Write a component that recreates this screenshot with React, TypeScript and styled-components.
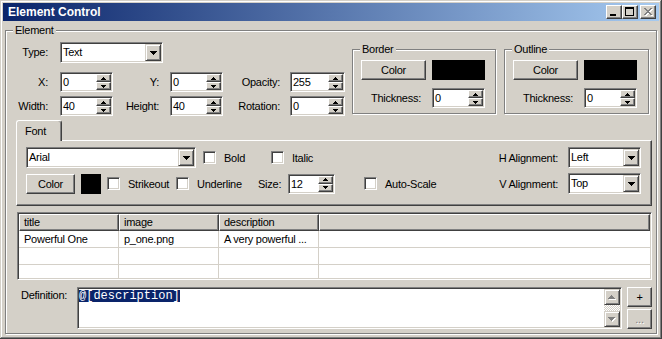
import React from "react";
import styled, { createGlobalStyle, css } from "styled-components";

const FACE = "#d4d0c8";
const SHADOW = "#808080";
const DARK = "#404040";
const UI_FONT = `"Liberation Sans", Arial, sans-serif`;

const GlobalStyle = createGlobalStyle`
  html, body {
    margin: 0;
    padding: 0;
    background: ${FACE};
  }
  body {
    font-family: ${UI_FONT};
    font-size: 11px;
    letter-spacing: -0.25px;
    color: #000;
  }
  * {
    box-sizing: border-box;
  }
`;

// classic 3D edges
const sunken = css`
  border: 1px solid;
  border-color: ${SHADOW} #fff #fff ${SHADOW};
  box-shadow: inset 1px 1px ${DARK}, inset -1px -1px ${FACE};
`;

const raised = css`
  border: 1px solid;
  border-color: #fff ${DARK} ${DARK} #fff;
  box-shadow: inset -1px -1px ${SHADOW};
`;

const Window = styled.div`
  width: 662px;
  height: 339px;
  padding: 3px;
  display: flex;
  flex-direction: column;
  background: ${FACE};
  box-shadow:
    inset -1px -1px ${DARK},
    inset 1px 1px ${FACE},
    inset -2px -2px ${SHADOW},
    inset 2px 2px #fff;
`;

const TitleBar = styled.div`
  height: 18px;
  display: flex;
  align-items: center;
  padding: 0 3px 0 5px;
  background: linear-gradient(to right, #0a246a, #a6caf0);
  color: #fff;
  font: bold 12px "Liberation Sans", Arial, sans-serif;
  letter-spacing: 0;
`;

const TitleButtons = styled.div`
  margin-left: auto;
  display: flex;
`;

const CaptionButton = styled.div<{ $gap?: number }>`
  width: 16px;
  height: 14px;
  margin-left: ${(p) => p.$gap ?? 0}px;
  background: ${FACE};
  ${raised};
  display: flex;
`;

const Body = styled.div`
  flex: 1;
  display: flex;
  padding: 9px 2px 2px;
`;

const Frame = styled.div`
  position: relative;
  border: 1px solid ${SHADOW};
  box-shadow: inset 1px 1px #fff, 1px 1px #fff;
`;

const ElementFrame = styled(Frame)`
  flex: 1;
  display: flex;
  flex-direction: column;
  padding: 11px 4px 4px 2px;
`;

const SubFrame = styled(Frame)<{ $w: number; $ml: number }>`
  width: ${(p) => p.$w}px;
  height: 65px;
  margin: 7px 0 0 ${(p) => p.$ml}px;
  padding: 10px 0 0 8px;
`;

const Legend = styled.span`
  position: absolute;
  top: -8px;
  left: 7px;
  padding: 0 2px;
  line-height: 14px;
  background: ${FACE};
`;

const TopSection = styled.div`
  height: 74px;
  display: flex;
  align-items: flex-start;
`;

const FieldGrid = styled.div`
  display: grid;
  grid-template-columns: 52px 53px 57px 53px 67px 55px;
  grid-template-rows: 26px 20px 20px;
  row-gap: 4px;
  align-items: start;
`;

const FieldLabel = styled.label<{ $pad: number; $lh?: number }>`
  text-align: right;
  padding-right: ${(p) => p.$pad}px;
  line-height: ${(p) => p.$lh ?? 20}px;
  white-space: nowrap;
`;

const TypeCell = styled.div`
  grid-column: span 5;
`;

const SubGrid = styled.div`
  display: grid;
  grid-template-columns: 65px 53px;
  grid-template-rows: 20px 20px;
  column-gap: 6px;
  row-gap: 8px;
`;

const SideLabel = styled.label`
  text-align: right;
  padding-right: 5px;
  line-height: 20px;
  white-space: nowrap;
`;

const SpinBox = styled.div<{ $w: number }>`
  width: ${(p) => p.$w}px;
  height: 20px;
  padding: 1px;
  display: flex;
  background: #fff;
  ${sunken};
`;

const FieldText = styled.div`
  flex: 1;
  padding-left: 1px;
  line-height: 16px;
  white-space: nowrap;
  overflow: hidden;
`;

const SpinButtons = styled.div`
  width: 15px;
  display: flex;
  flex-direction: column;
`;

const SpinButton = styled.div`
  flex: 1;
  display: flex;
  align-items: center;
  justify-content: center;
  background: ${FACE};
  ${raised};
`;

const ComboBox = styled.div<{ $w: number }>`
  width: ${(p) => p.$w}px;
  height: 21px;
  padding: 1px;
  display: flex;
  background: #fff;
  ${sunken};
`;

const DropButton = styled.div`
  width: 16px;
  display: flex;
  align-items: center;
  justify-content: center;
  background: ${FACE};
  border: 1px solid;
  border-color: ${FACE} ${DARK} ${DARK} ${FACE};
  box-shadow: inset 1px 1px #fff, inset -1px -1px ${SHADOW};
`;

const PushButton = styled.button<{ $w: number; $disabled?: boolean }>`
  width: ${(p) => p.$w}px;
  height: 20px;
  padding: 0;
  background: ${FACE};
  font-family: ${UI_FONT};
  font-size: 11px;
  letter-spacing: -0.25px;
  color: ${(p) => (p.$disabled ? SHADOW : "#000")};
  text-shadow: ${(p) => (p.$disabled ? "1px 1px #fff" : "none")};
  ${raised};
`;

const Swatch = styled.div<{ $w: number }>`
  width: ${(p) => p.$w}px;
  height: 20px;
  background: #000;
`;

const Tabs = styled.div`
  margin: 4px 0 0 8px;
  display: flex;
  flex-direction: column;
`;

const TabStrip = styled.div`
  height: 20px;
  display: flex;
  align-items: flex-end;
`;

const Tab = styled.div`
  position: relative;
  z-index: 1;
  width: 46px;
  height: 21px;
  margin-bottom: -1px;
  padding: 3px 0 0 8px;
  line-height: 14px;
  background: ${FACE};
  border: 1px solid #fff;
  border-bottom: none;
  border-right-color: ${DARK};
  border-radius: 3px 3px 0 0;
  box-shadow: inset -1px 0 ${SHADOW};
`;

const TabPane = styled.div`
  height: 66px;
  padding: 6px 10px 0 9px;
  display: flex;
  flex-direction: column;
  gap: 5px;
  background: ${FACE};
  ${raised};
`;

const PaneRow = styled.div`
  height: 21px;
  display: flex;
  align-items: center;
`;

const Gap = styled.div<{ $w: number }>`
  width: ${(p) => p.$w}px;
  flex-shrink: 0;
`;

const CheckItem = styled.label<{ $w?: number }>`
  width: ${(p) => (p.$w ? `${p.$w}px` : "auto")};
  flex-shrink: 0;
  display: flex;
  align-items: center;
  gap: 8px;
  white-space: nowrap;
`;

const CheckBox = styled.span`
  width: 13px;
  height: 13px;
  flex-shrink: 0;
  background: #fff;
  ${sunken};
`;

const InlineLabel = styled.span<{ $w: number }>`
  width: ${(p) => p.$w}px;
  flex-shrink: 0;
  white-space: nowrap;
`;

const AlignPair = styled.div`
  margin-left: auto;
  display: flex;
  align-items: center;
  gap: 10px;
  white-space: nowrap;
`;

const ListView = styled.div`
  margin: 6px 0 0 9px;
  height: 68px;
  padding: 1px;
  background: #fff;
  overflow: hidden;
  ${sunken};
`;

const ListGrid = styled.div`
  display: grid;
  grid-template-columns: 100px 100px 100px 1fr;
  grid-auto-rows: 17px;
`;

const HeaderCell = styled.div`
  padding-left: 4px;
  line-height: 15px;
  background: ${FACE};
  white-space: nowrap;
  ${raised};
`;

const Cell = styled.div<{ $fill?: boolean }>`
  padding-left: 5px;
  line-height: 16px;
  border-bottom: 1px solid ${FACE};
  border-right: ${(p) => (p.$fill ? "none" : `1px solid ${FACE}`)};
  white-space: nowrap;
  overflow: hidden;
`;

const DefRow = styled.div`
  height: 42px;
  margin: 7px 0 0 13px;
  display: flex;
`;

const DefLabel = styled.div`
  width: 56px;
  padding-top: 1px;
  line-height: 14px;
`;

const DefBox = styled.div`
  flex: 1;
  padding: 1px;
  display: flex;
  background: #fff;
  ${sunken};
`;

const DefText = styled.div`
  flex: 1;
`;

const Selected = styled.span`
  display: inline-block;
  height: 12px;
  line-height: 12px;
  font-family: "Liberation Mono", monospace;
  font-size: 12px;
  letter-spacing: 0;
  color: #fff;
  background: #0a246a;
`;

const ScrollBar = styled.div`
  width: 16px;
  display: flex;
  flex-direction: column;
`;

const ScrollButton = styled.div`
  height: 16px;
  display: flex;
  align-items: center;
  justify-content: center;
  background: ${FACE};
  border: 1px solid;
  border-color: ${FACE} ${DARK} ${DARK} ${FACE};
  box-shadow: inset 1px 1px #fff, inset -1px -1px ${SHADOW};
`;

const Track = styled.div`
  flex: 1;
  background: repeating-conic-gradient(#fff 0 25%, ${FACE} 0 50%) 0 0 / 2px 2px;
`;

const SideButtons = styled.div`
  width: 25px;
  margin-left: 5px;
  display: flex;
  flex-direction: column;
  gap: 2px;
`;

function SmallArrow({ up }: { up?: boolean }) {
  const d = up
    ? "M2 0h1v1h-1z M1 1h3v1h-3z M0 2h5v1h-5z"
    : "M0 0h5v1h-5z M1 1h3v1h-3z M2 2h1v1h-1z";
  return (
    <svg width="5" height="3" viewBox="0 0 5 3" shapeRendering="crispEdges">
      <path d={d} fill="#000" />
    </svg>
  );
}

const DOWN_7 = "M0 0h7v1h-7z M1 1h5v1h-5z M2 2h3v1h-3z M3 3h1v1h-1z";
const UP_7 = "M3 0h1v1h-1z M2 1h3v1h-3z M1 2h5v1h-5z M0 3h7v1h-7z";

function ComboArrow() {
  return (
    <svg width="7" height="4" viewBox="0 0 7 4" shapeRendering="crispEdges">
      <path d={DOWN_7} fill="#000" />
    </svg>
  );
}

function GreyArrow({ up }: { up?: boolean }) {
  return (
    <svg width="8" height="5" viewBox="0 0 8 5" shapeRendering="crispEdges">
      <path d={up ? UP_7 : DOWN_7} fill="#fff" transform="translate(1 1)" />
      <path d={up ? UP_7 : DOWN_7} fill={SHADOW} />
    </svg>
  );
}

function Spin({ value, w }: { value: string; w: number }) {
  return (
    <SpinBox $w={w}>
      <FieldText>{value}</FieldText>
      <SpinButtons>
        <SpinButton>
          <SmallArrow up />
        </SpinButton>
        <SpinButton>
          <SmallArrow />
        </SpinButton>
      </SpinButtons>
    </SpinBox>
  );
}

function Combo({ value, w }: { value: string; w: number }) {
  return (
    <ComboBox $w={w}>
      <FieldText>{value}</FieldText>
      <DropButton>
        <ComboArrow />
      </DropButton>
    </ComboBox>
  );
}

function Check({ label, w }: { label: string; w?: number }) {
  return (
    <CheckItem $w={w}>
      <CheckBox />
      {label}
    </CheckItem>
  );
}

function CloseGlyph() {
  const rows = Array.from({ length: 7 }, (_, i) => i);
  const cross = rows
    .map((i) => `M${3 + i} ${2 + i}h2v1h-2z M${9 - i} ${2 + i}h2v1h-2z`)
    .join(" ");
  return (
    <svg width="14" height="12" viewBox="0 0 14 12" shapeRendering="crispEdges">
      <path d={cross} fill="#fff" transform="translate(1 1)" />
      <path d={cross} fill={SHADOW} />
    </svg>
  );
}

function ColorBlock({ title, w, ml }: { title: string; w: number; ml: number }) {
  return (
    <SubFrame $w={w} $ml={ml}>
      <Legend>{title}</Legend>
      <SubGrid>
        <PushButton $w={65}>Color</PushButton>
        <Swatch $w={53} />
        <SideLabel>Thickness:</SideLabel>
        <Spin value="0" w={53} />
      </SubGrid>
    </SubFrame>
  );
}

export default function App() {
  return (
    <>
      <GlobalStyle />
      <Window>
        <TitleBar>
          Element Control
          <TitleButtons>
            <CaptionButton>
              <svg width="14" height="12" viewBox="0 0 14 12" shapeRendering="crispEdges">
                <rect x="3" y="8" width="6" height="2" fill="#000" />
              </svg>
            </CaptionButton>
            <CaptionButton>
              <svg width="14" height="12" viewBox="0 0 14 12" shapeRendering="crispEdges">
                <path d="M2 1h9v2h-9z M2 3h1v7h-1z M10 3h1v7h-1z M2 9h9v1h-9z" fill="#000" />
              </svg>
            </CaptionButton>
            <CaptionButton $gap={2}>
              <CloseGlyph />
            </CaptionButton>
          </TitleButtons>
        </TitleBar>

        <Body>
          <ElementFrame>
            <Legend>Element</Legend>

            <TopSection>
              <FieldGrid>
                <FieldLabel $pad={12} $lh={21}>Type:</FieldLabel>
                <TypeCell>
                  <Combo value="Text" w={103} />
                </TypeCell>

                <FieldLabel $pad={12}>X:</FieldLabel>
                <Spin value="0" w={53} />
                <FieldLabel $pad={11}>Y:</FieldLabel>
                <Spin value="0" w={53} />
                <FieldLabel $pad={10}>Opacity:</FieldLabel>
                <Spin value="255" w={55} />

                <FieldLabel $pad={12}>Width:</FieldLabel>
                <Spin value="40" w={53} />
                <FieldLabel $pad={11}>Height:</FieldLabel>
                <Spin value="40" w={53} />
                <FieldLabel $pad={10}>Rotation:</FieldLabel>
                <Spin value="0" w={55} />
              </FieldGrid>

              <ColorBlock title="Border" w={144} ml={7} />
              <ColorBlock title="Outline" w={145} ml={8} />
            </TopSection>

            <Tabs>
              <TabStrip>
                <Tab>Font</Tab>
              </TabStrip>
              <TabPane>
                <PaneRow>
                  <Combo value="Arial" w={170} />
                  <Gap $w={7} />
                  <Check label="Bold" w={68} />
                  <Check label="Italic" />
                  <AlignPair>
                    H Alignment:
                    <Combo value="Left" w={73} />
                  </AlignPair>
                </PaneRow>
                <PaneRow>
                  <PushButton $w={49}>Color</PushButton>
                  <Gap $w={6} />
                  <Swatch $w={20} />
                  <Gap $w={6} />
                  <Check label="Strikeout" w={69} />
                  <Check label="Underline" w={82} />
                  <InlineLabel $w={30}>Size:</InlineLabel>
                  <Spin value="12" w={47} />
                  <Gap $w={29} />
                  <Check label="Auto-Scale" />
                  <AlignPair>
                    V Alignment:
                    <Combo value="Top" w={73} />
                  </AlignPair>
                </PaneRow>
              </TabPane>
            </Tabs>

            <ListView>
              <ListGrid>
                <HeaderCell>title</HeaderCell>
                <HeaderCell>image</HeaderCell>
                <HeaderCell>description</HeaderCell>
                <HeaderCell />

                <Cell>Powerful One</Cell>
                <Cell>p_one.png</Cell>
                <Cell>A very powerful ...</Cell>
                <Cell $fill />

                <Cell />
                <Cell />
                <Cell />
                <Cell $fill />

                <Cell />
                <Cell />
                <Cell />
                <Cell $fill />
              </ListGrid>
            </ListView>

            <DefRow>
              <DefLabel>Definition:</DefLabel>
              <DefBox>
                <DefText>
                  <Selected>@[description]</Selected>
                </DefText>
                <ScrollBar>
                  <ScrollButton>
                    <GreyArrow up />
                  </ScrollButton>
                  <Track />
                  <ScrollButton>
                    <GreyArrow />
                  </ScrollButton>
                </ScrollBar>
              </DefBox>
              <SideButtons>
                <PushButton $w={25}>+</PushButton>
                <PushButton $w={25} $disabled>
                  ...
                </PushButton>
              </SideButtons>
            </DefRow>
          </ElementFrame>
        </Body>
      </Window>
    </>
  );
}
